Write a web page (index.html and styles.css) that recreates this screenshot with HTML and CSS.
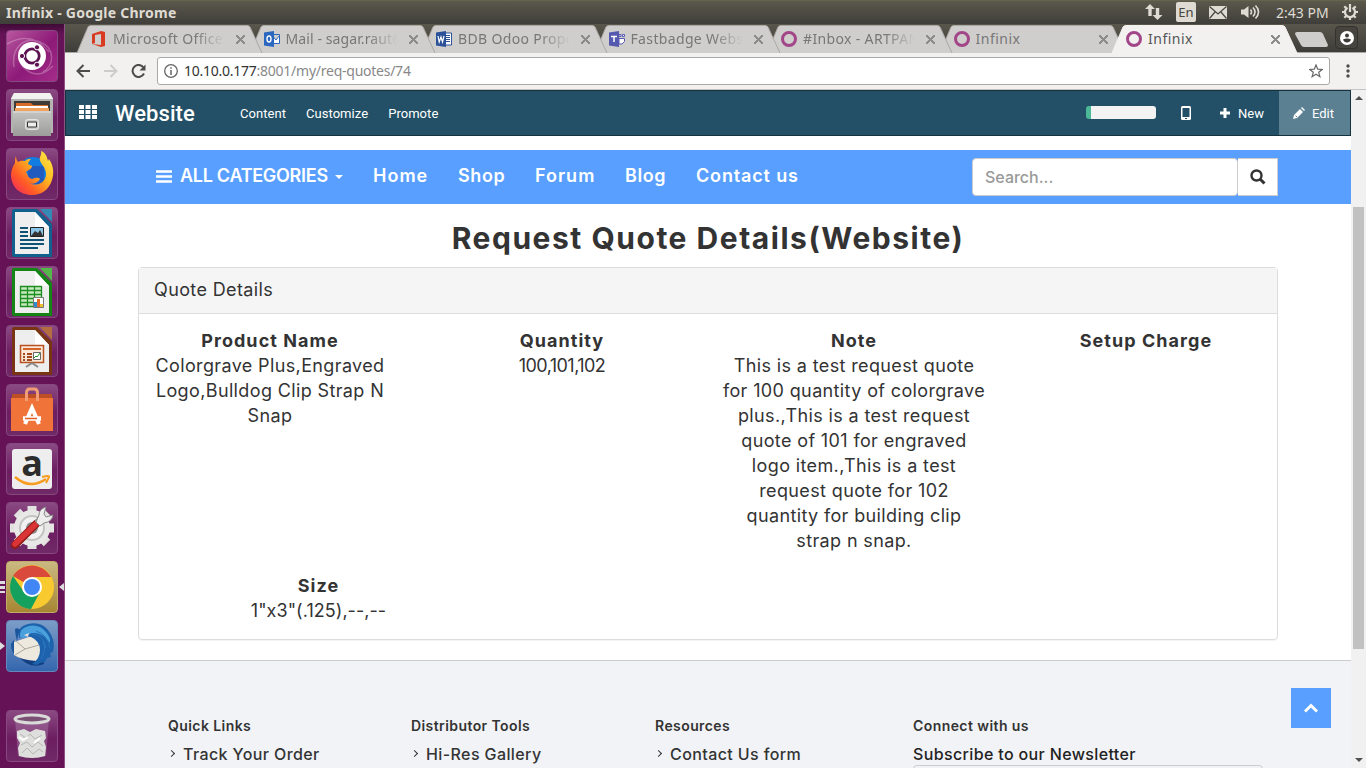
FILE: index.html
```html
<!DOCTYPE html>
<html lang="en">
<head>
<meta charset="utf-8">
<title>Infinix</title>
<link rel="stylesheet" href="styles.css">
</head>
<body>
<header class="sysbar">
  <span class="sysbar-title">Infinix - Google Chrome</span>
  <div class="indicators">
    <svg class="ind-net" width="18" height="18" viewBox="0 0 18 18"><path d="M5 1L0 6h3.300v7h3.400V6H10zM12.500 17l5-5h-3.300V5h-3.400v7H7.500z" fill="#dfdbd2"/></svg>
    <span class="ind-lang">En</span>
    <svg class="ind-mail" width="18" height="13" viewBox="0 0 18 13"><path fill="#dfdbd2" d="M0 0h18v13H0z"/><path d="M.5.5L9 8l8.500-7.500M.5 12.500L6 6m11.500 6.500L12 6" fill="none" stroke="#4b4a44" stroke-width="1.300"/></svg>
    <svg class="ind-vol" width="21" height="16" viewBox="0 0 21 16"><path fill="#dfdbd2" d="M0 5.500h3L7.500 2v12L3 10.500H0z"/><path d="M9.500 5.500q2 2.500 0 5M12 3.500q4 4.500 0 9M14.500 1.500q6 6.500 0 13" stroke="#dfdbd2" stroke-width="1.600" fill="none"/></svg>
    <span class="ind-clock">2:43 PM</span>
    <svg class="ind-gear" width="16" height="16" viewBox="0 0 16 16"><g stroke="#dfdbd2" fill="none"><path stroke-width="2.200" d="M5.500 3.700a5 5 0 1 0 5 0"/><path stroke-width="2.200" d="M8 0v8M0 8h3M13 8h3M8 13v3M2.300 13.700l2-2M13.700 13.700l-2-2M2.300 2.300l2 2M13.700 2.300l-2 2"/></g></svg>
  </div>
</header>
<div class="desktop">
  <aside class="launcher">
    <div class="tile tile-dash"><svg viewBox="0 0 52 52"><g fill="none" stroke="#fff" stroke-opacity=".25" stroke-width="1.500"><path d="M8 37C5 18 18 6 34 12s14 24 3 30M1 14q25-14 42 8M16 36q15 16 31 0"/></g><circle cx="26" cy="26" r="14" fill="#fff"/><circle cx="26" cy="26" r="7.200" fill="none" stroke="#5c1150" stroke-width="2.800"/><g fill="#5c1150" stroke="#fff" stroke-width="1"><circle cx="16" cy="26" r="2.600"/><circle cx="31" cy="17.300" r="2.600"/><circle cx="31" cy="34.700" r="2.600"/></g></svg></div>
    <div class="tile"><svg viewBox="0 0 52 52"><defs><linearGradient id="steel" x1="0" y1="0" x2="0" y2="1"><stop offset="0" stop-color="#c4c4c2"/><stop offset="1" stop-color="#9c9c9a"/></linearGradient></defs><path fill="#b4b4b2" d="M8 4h36l3 5v35H5V9z"/><path fill="#f2f2f0" d="M8 4h36l3 6H5z"/><path fill="#3e3b39" d="M8 12h36v12H8z"/><path fill="#d86b28" d="M10 14h15l2 2h15v8H10z"/><path fill="#fff" d="M10 17h32v3H10z"/><path fill="#f2a25c" d="M9 19h34v5H9z"/><path fill="url(#steel)" d="M7 22h38v25H7z"/><path fill="#d2d2d0" d="M7 22h38v2H7z"/><rect x="19.500" y="30.500" width="13" height="10" rx="2" fill="#c9c9c7" stroke="#e6e6e4"/><path fill="#eee" stroke="#333" d="M21.500 33h9v5h-9z"/></svg></div>
    <div class="tile"><svg viewBox="0 0 52 52"><defs><linearGradient id="fox" x1="1" y1="0" x2="0" y2="1"><stop offset="0" stop-color="#fff04a"/><stop offset=".4" stop-color="#ffb520"/><stop offset=".7" stop-color="#ff5a26"/><stop offset="1" stop-color="#ef1f68"/></linearGradient></defs><circle cx="27" cy="24" r="15" fill="#137ce0"/><path fill="#205bc0" d="M22 18h16v18H22z"/><path fill="url(#fox)" d="M10 8c0 3 1 5 2 6 3-2 6-1 7-1 2-2 4-2 6-2-2 2-3 4-3 5l4 2c0 3-4 4-6 6 2 3 2 6 6 7 3-1 6-2 8 0-2 4-8 6-11 4 8 4 16 0 17-8 1-8-8-12-6-18 2-4 1-5 1-6 5 2 6 6 7 10l1-2c5 7 5 15 3 21-3 10-11 15-20 15C13 47 5 38 5 27c0-5 2-9 4-12 0-3 0-5 1-7z"/></svg></div>
    <div class="tile"><svg viewBox="0 0 52 52"><path fill="#11618f" d="M8 2h23l15 15v33H8q-2 0-2-2V4q0-2 2-2z"/><path fill="#348ab5" d="M34 2h12v13z"/><path fill="#eee" d="M9 5h20l14 15v27H9z"/><path fill="#fff" d="M29 5v15h14z"/><path d="M14 21h8M14 25h8M14 29h8M14 33h24M14 37h24M14 41h18" stroke="#0e5276" stroke-width="1.800"/><path fill="#89c5e6" stroke="#222" d="M24.500 20.500h13v9h-13z"/><path d="M25 29l4-5 3 2 2-3 3 6z" fill="#333"/></svg></div>
    <div class="tile"><svg viewBox="0 0 52 52"><path fill="#148414" d="M8 2h23l15 15v33H8q-2 0-2-2V4q0-2 2-2z"/><path fill="#55b64a" d="M34 2h12v13z"/><path fill="#eee" d="M9 5h20l14 15v27H9z"/><path fill="#fff" d="M29 5v15h14z"/><path fill="#c8e8bf" stroke="#1d8f22" stroke-width="1.300" d="M14.500 20.500h21v20h-21zM14.500 24.500h21M14.500 28.500h21M14.500 32.500h21M14.500 36.500h21M21.500 20.500v20M28.500 20.500v20"/><path fill="#fff" stroke="#777" d="M27.500 31.500h10v10h-10z"/><path fill="#318bd0" d="M28 36h3v5h-3z"/><path fill="#e46b25" d="M31 33h3v8h-3z"/><path fill="#f0bd30" d="M34 38h3v3h-3z"/></svg></div>
    <div class="tile"><svg viewBox="0 0 52 52"><path fill="#793513" d="M8 2h23l15 15v33H8q-2 0-2-2V4q0-2 2-2z"/><path fill="#b36d40" d="M34 2h12v13z"/><path fill="#eee" d="M9 5h20l14 15v27H9z"/><path fill="#fff" d="M29 5v15h14z"/><path fill="#fbe7d8" stroke="#b75321" stroke-width="1.500" d="M14.500 20.500h23v17h-23z"/><path stroke="#d46427" stroke-width="2" d="M17 24h18"/><path stroke="#a44820" stroke-width="2" d="M17 29h2m2 0h5M17 32h2m2 0h5M17 35h2m2 0h5"/><path fill="#fff" stroke="#666" d="M27.500 27.500h7v7h-7z"/><path d="M28 33l2-2 1 1 3-4" stroke="#1f962d" fill="none"/><path d="M26 38l-6 4m6-4l6 4" stroke="#888" stroke-width="2"/></svg></div>
    <div class="tile"><svg viewBox="0 0 52 52"><path fill="#bd4f27" d="M6 10h40v5H6z"/><path fill="#f0743a" d="M5 14h42v33H5z"/><path d="M20.500 17V9q0-4 3-4h5q3 0 3 4v8" fill="none" stroke="#f09c76" stroke-width="3"/><path d="M19 40l7-16 7 16" fill="none" stroke="#fff" stroke-width="4"/><path d="M17 34.500h18" stroke="#fff" stroke-width="4.500"/><path d="M19 34.500h12" stroke="#e55d22" stroke-width="1.500"/></svg></div>
    <div class="tile"><svg viewBox="0 0 52 52"><rect x="6" y="6" width="40" height="40" rx="3" fill="#eee"/><text class="amz" x="26" y="33" text-anchor="middle">a</text><path d="M9 34q15 13 31 2" fill="none" stroke="#f79c1f" stroke-width="2.500"/><path d="M36 34q8-2 7 0l-3 6" fill="none" stroke="#f79c1f" stroke-width="2"/></svg></div>
    <div class="tile"><svg viewBox="0 0 52 52"><g stroke="#e2e2e0" stroke-width="9"><path d="M26 4v43M4 26h44M11 10l30 31M41 10L11 41"/></g><circle cx="26" cy="26" r="18" fill="#e8e8e6"/><circle cx="26" cy="26" r="12" fill="#f2f2f2" stroke="#c4c4c2" stroke-width="2"/><circle cx="26" cy="26" r="6" fill="#8d8d8b"/><path d="M9 43l21-21" stroke="#951c1c" stroke-width="8" stroke-linecap="round"/><path d="M9 42l21-20" stroke="#db3434" stroke-width="5.500" stroke-linecap="round"/><path d="M31 21l6-6" stroke="#999" stroke-width="7"/><path fill="#eee" stroke="#888" d="M33 13q0-6 7-8l-2 7 2 3 7-2q-1 7-9 8l-4 3-4-4z"/></svg></div>
    <div class="tile tile-chrome"><svg viewBox="0 0 52 52"><circle cx="26" cy="26" r="22" fill="#f9c930"/><path d="M26 26L7 15a22 22 0 0 1 38 1H26z" fill="#d94a3d"/><path d="M7 15a22 22 0 0 0 18 33l9-17-8-5-8 5z" fill="#14a05d"/><circle cx="26" cy="26" r="10" fill="#fff"/><circle cx="26" cy="26" r="8" fill="#4186f5"/></svg><span class="pips"></span><svg class="focus" viewBox="0 0 5 8"><path d="M5 0v8L0 4z" fill="#ddd"/></svg></div>
    <div class="tile tile-bird"><svg viewBox="0 0 52 52"><path fill="#123f80" d="M12 36q12 14 26 8l-2-16z"/><path fill="#eee9df" d="M8 22l24-8 6 12-7 15q-16-1-23-6z"/><path d="M9 20l10 9 14-4M19 29l-10 6" fill="none" stroke="#aaa69d"/><path fill="#1d62ac" d="M13 18q-3-11 9-14 13-3 20 6 8 10 5 22l-3 1 1 4-4 1-2 4-5 1-3 2-5-1q8-5 8-14t-9-13q-5-2-12 1z"/><path fill="#49a0dc" d="M14 17q-1-9 9-11 10-2 17 6 5 6 4 11-8-11-16-10-6 0-8 5z"/><path d="M26 14q11 0 14 14M30 11q11 3 14 17M37 21q4 8-2 18" stroke="#2876bb" fill="none"/><path fill="#1b569d" d="M9 9q3-2 5 1-2 4-3 11-2-8-2-12zM5 24l3-4v14q-3-4-3-10z"/><path d="M18 15l5-2-1 4z" fill="#ddd"/></svg><svg class="run" viewBox="0 0 5 8"><path d="M0 0v8l5-4z" fill="#ddd"/></svg></div>
    <div class="tile tile-trash"><svg viewBox="0 0 52 52"><path d="M9 9l3 37q14 4 28 0l3-37z" fill="#b58ab1" fill-opacity=".4"/><path fill="#dededc" d="M11 21l7-2 6 3 6-3 9 2 1 7-2 3 2 6-1 9q-13 4-26 0l-1-8 2-5-3-5z"/><path d="M14 24l6 4 4-4 5 5 7-4M15 35l6-3 5 5 6-5 5 4M16 43l5-5 6 6 6-5 4 3" stroke="#b5b5b3" fill="none"/><path d="M13 27l4 3 5-3M28 33l6-5" stroke="#fff" stroke-width="2" fill="none"/><ellipse cx="26" cy="9" rx="17" ry="4" fill="#7a5075" stroke="#dadad8" stroke-width="3"/></svg></div>
  </aside>
  <main class="browser">
    <div class="tabstrip">
      <div class="tab t1"><svg class="shape" viewBox="0 0 186 28"><path d="M0 28L11 2Q12 .5 14 .5h156q2 0 3 1.500L185 28"/></svg>
        <svg class="fav" viewBox="0 0 16 16"><path fill="#d83b22" d="M1 3l9-3 4 1v14l-4 1-9-3 9 1V3L4 4v8l-3 1z"/></svg><span class="tab-label fade">Microsoft Office H</span><i class="x"></i></div>
      <div class="tab t2"><svg class="shape" viewBox="0 0 186 28"><path d="M0 28L11 2Q12 .5 14 .5h156q2 0 3 1.500L185 28"/></svg>
        <svg class="fav" viewBox="0 0 16 16"><path fill="#fff" stroke="#2a67be" d="M8 3.500h7.500v9H8zM8 4l4 5 4-5"/><path fill="#2a67be" d="M0 1.500L10 0v16L0 14.500z"/><ellipse cx="5" cy="8" rx="2" ry="3" stroke="#fff" stroke-width="1.400" fill="none"/></svg><span class="tab-label fade tight">Mail - sagar.raut@</span><i class="x"></i></div>
      <div class="tab t3"><svg class="shape" viewBox="0 0 186 28"><path d="M0 28L11 2Q12 .5 14 .5h156q2 0 3 1.500L185 28"/></svg>
        <svg class="fav" viewBox="0 0 16 16"><path fill="#fff" stroke="#2b5299" d="M8 2h7.500v12H8zM9 4.500h5M9 6.500h5M9 8.500h5M9 10.500h5"/><path fill="#2b5299" d="M0 1.500L10 0v16L0 14.500z"/><path d="M2 5l1.200 6L5 6l1.500 5L8 5" fill="none" stroke="#fff" stroke-width="1.200"/></svg><span class="tab-label fade">BDB Odoo Propo</span><i class="x"></i></div>
      <div class="tab t4"><svg class="shape" viewBox="0 0 186 28"><path d="M0 28L11 2Q12 .5 14 .5h156q2 0 3 1.500L185 28"/></svg>
        <svg class="fav" viewBox="0 0 16 16"><path fill="#fff" stroke="#5558af" d="M10 3.500h2v2h-2zM13.500 3.500h2v2h-2zM10 7.500h5.500v3L13 13h-3z"/><path fill="#5558af" d="M0 1.500L10 0v16L0 14.500z"/><path d="M2 5.500h6M5 5v6" stroke="#fff" stroke-width="1.500"/></svg><span class="tab-label fade">Fastbadge Websi</span><i class="x"></i></div>
      <div class="tab t5"><svg class="shape" viewBox="0 0 186 28"><path d="M0 28L11 2Q12 .5 14 .5h156q2 0 3 1.500L185 28"/></svg>
        <span class="fav ring"></span><span class="tab-label fade">#Inbox - ARTPAN</span><i class="x"></i></div>
      <div class="tab t6"><svg class="shape" viewBox="0 0 186 28"><path d="M0 28L11 2Q12 .5 14 .5h156q2 0 3 1.500L185 28"/></svg>
        <span class="fav ring"></span><span class="tab-label wide">Infinix</span><i class="x"></i></div>
      <div class="tab active"><svg class="shape" viewBox="0 0 186 28"><path d="M0 28L11 2Q12 .5 14 .5h156q2 0 3 1.500L185 28"/></svg>
        <span class="fav ring"></span><span class="tab-label wide">Infinix</span><i class="x"></i></div>
      <svg class="newtab" viewBox="0 0 33 15"><path d="M2 0h23q2 0 3 2l5 11q0 2-2 2H9q-2 0-3-2L0 2q0-2 2-2z" fill="#cfcdcb"/></svg>
      <div class="profile"><svg viewBox="0 0 14 14"><circle cx="7" cy="7" r="7" fill="#fff"/><circle cx="7" cy="4.500" r="2" fill="#3d3c38"/><path fill="#3d3c38" d="M3 8.500q4-2 8 0-1 3-4 3t-4-3z"/></svg></div>
    </div>
    <div class="toolbar">
      <svg class="ic-back" viewBox="0 0 14 14"><path d="M14 7H1.500M7.500 1L1.500 7l6 6" fill="none" stroke="#4c4c4c" stroke-width="2"/></svg>
      <svg class="ic-fwd" viewBox="0 0 14 14"><path d="M0 7h12.500M6.500 1l6 6-6 6" fill="none" stroke="#ccc" stroke-width="2"/></svg>
      <svg class="ic-reload" viewBox="0 0 15 15"><path d="M12.500 3.500A6 6 0 1 0 13 9.500" fill="none" stroke="#4c4c4c" stroke-width="2"/><path fill="#4c4c4c" d="M14.500.5v6h-6z"/></svg>
      <div class="omnibox">
        <svg class="ic-info" viewBox="0 0 14 14"><circle cx="7" cy="7" r="6.300" fill="none" stroke="#666" stroke-width="1.300"/><path d="M7 6v5M7 3.200v1.600" stroke="#666" stroke-width="1.500"/></svg>
        <span class="url"><b>10.10.0.177</b>:8001/my/req-quotes/74</span>
        <svg class="ic-star" viewBox="0 0 14 14"><path d="M7 1l1.700 4.200 4.500.3-3.500 2.800 1.200 4.400L7 10.300l-3.900 2.400 1.200-4.400L.8 5.500l4.500-.3z" fill="none" stroke="#666" stroke-width="1.200"/></svg>
      </div>
      <svg class="ic-dots" viewBox="0 0 4 14"><g fill="#4c4c4c"><circle cx="2" cy="2" r="1.700"/><circle cx="2" cy="7" r="1.700"/><circle cx="2" cy="12" r="1.700"/></g></svg>
    </div>
    <div class="viewport">
      <div class="page">
        <div class="odoo">
          <svg class="apps" viewBox="0 0 18 14"><path fill="#fff" d="M0 0h5v4H0zM6.500 0h5v4h-5zM13 0h5v4h-5zM0 5h5v4H0zM6.500 5h5v4h-5zM13 5h5v4h-5zM0 10h5v4H0zM6.500 10h5v4h-5zM13 10h5v4h-5z"/></svg>
          <span class="brand">Website</span>
          <a class="om">Content</a><a class="om">Customize</a><a class="om">Promote</a>
          <span class="meter"></span>
          <svg class="phone" viewBox="0 0 10 14"><rect width="10" height="14" rx="1.500" fill="#fff"/><path fill="#235066" d="M1.500 2h7v9h-7zM4 12h2v1H4z"/></svg>
          <span class="new"><svg viewBox="0 0 10 10"><path d="M5 0v10M0 5h10" stroke="#fff" stroke-width="3"/></svg>New</span>
          <span class="edit"><svg viewBox="0 0 12 12"><path fill="#fff" d="M0 12l1-4 6-6 3 3-6 6zM8 1l1-1 3 3-1 1z"/><path d="M2.500 8.500L4 10" stroke="#5a8092"/></svg>Edit</span>
        </div>
        <nav class="nav">
          <svg class="burger" viewBox="0 0 16 13"><path d="M0 1.500h16M0 6.500h16M0 11.500h16" stroke="#fff" stroke-width="2.600"/></svg>
          <a class="cat">ALL CATEGORIES</a><i class="caret"></i>
          <a class="n-home">Home</a><a class="n-shop">Shop</a><a class="n-forum">Forum</a><a class="n-blog">Blog</a><a class="n-contact">Contact us</a>
          <div class="search"><span class="field">Search...</span><span class="go"><svg viewBox="0 0 16 16"><circle cx="6.500" cy="6.500" r="5" fill="none" stroke="#333" stroke-width="2.400"/><path d="M10 10l4.500 4.500" stroke="#333" stroke-width="3"/></svg></span></div>
        </nav>
        <h1>Request Quote Details(Website)</h1>
        <section class="panel">
          <div class="panel-head">Quote Details</div>
          <div class="panel-body">
            <div class="cols">
              <div><strong>Product Name</strong><br>Colorgrave Plus,Engraved<br>Logo,Bulldog Clip Strap N<br>Snap</div>
              <div><strong>Quantity</strong><br><span class="nums">100,101,102</span></div>
              <div><strong>Note</strong><br>This is a test request quote<br>for 100 quantity of colorgrave<br>plus.,This is a test request<br>quote of 101 for engraved<br>logo item.,This is a test<br>request quote for 102<br>quantity for building clip<br>strap n snap.</div>
              <div><strong>Setup Charge</strong></div>
            </div>
            <div class="size"><strong>Size</strong><br><span class="dims">1"x3"(.125),--,--</span></div>
          </div>
        </section>
        <footer class="footer">
          <div><h2>Quick Links</h2><a class="link"><i></i>Track Your Order</a></div>
          <div><h2>Distributor Tools</h2><a class="link"><i></i>Hi-Res Gallery</a></div>
          <div><h2>Resources</h2><a class="link"><i></i>Contact Us form</a></div>
          <div><h2>Connect with us</h2><span class="link sub">Subscribe to our Newsletter</span><span class="mailbox"></span></div>
        </footer>
        <span class="totop"><svg viewBox="0 0 16 10"><path d="M2 8.500l6-6 6 6" fill="none" stroke="#fff" stroke-width="3"/></svg></span>
      </div>
      <div class="scroll"><i class="up"></i><span class="thumb"></span><i class="down"></i></div>
    </div>
  </main>
</div>
</body>
</html>
```
FILE: styles.css
```css
* { box-sizing: border-box; }
body { margin: 0; width: 1366px; height: 768px; overflow: hidden; display: flex; flex-direction: column; background: #fff; font-family: Inter, sans-serif; color: #333; }
svg { display: block; flex: none; }

/* System bar */
.sysbar { height: 24px; flex: none; display: flex; align-items: center; background: linear-gradient(#5b584c, #3f3e3a); border-top: 1px solid #66634f; padding: 0 8px 1px 6px; color: #dfdbd2; font-family: "Noto Sans", sans-serif; }
.sysbar-title { font-size: 14px; font-weight: 700; letter-spacing: .25px; }
.indicators { margin-left: auto; display: flex; align-items: center; }
.ind-lang { width: 20px; height: 20px; margin-left: 13px; background: #dfdbd2; border-radius: 2px; color: #45443f; font-size: 13px; line-height: 21px; text-align: center; }
.ind-mail { margin-left: 13px; }
.ind-vol { margin-left: 14px; }
.ind-clock { width: 52px; margin-left: 14px; font-size: 14px; letter-spacing: 0; white-space: nowrap; }
.ind-gear { margin-left: 14px; }

.desktop { flex: 1; display: flex; min-height: 0; }

/* Launcher */
.launcher { width: 65px; flex: none; padding: 6px 0 0 6px; display: flex; flex-direction: column; gap: 7px; background: linear-gradient(#3f0a36, #651257 10px); border-right: 1px solid #8d5284; }
.tile { position: relative; width: 52px; height: 52px; flex: none; border-radius: 4px; background: linear-gradient(#8a4a82, #6c1d60 55%, #702a67); border: 1px solid #874780; }
.tile > svg:first-child { width: 52px; height: 52px; margin: -1px; }
.tile-dash { background: linear-gradient(135deg, #b8579f, #8d1a78 55%, #a52d8b); }
.tile-chrome { background: linear-gradient(#cbb982, #a78633); border-color: #c2aa69; }
.tile-bird { background: linear-gradient(#7d9dc7, #3466ae); border-color: #6689bc; }
.tile-trash { margin-top: 31px; }
.amz { font: 700 36px "Open Sans", sans-serif; fill: #2c2c2c; }
.focus { position: absolute; left: 52px; top: 21px; width: 5px; height: 8px; }
.run { position: absolute; left: -7px; top: 21px; width: 5px; height: 8px; }
.pips { position: absolute; left: -7px; top: 19px; width: 5px; height: 12px; background: repeating-linear-gradient(#ddd 0 3px, transparent 3px 5px); }

/* Browser chrome */
.browser { flex: 1; min-width: 0; display: flex; flex-direction: column; }
.tabstrip { height: 29px; flex: none; padding-left: 13px; display: flex; background: linear-gradient(#59574c, #3e3d39); border-bottom: 1px solid #a9a8a6; font-family: "Noto Sans", sans-serif; }
.tab { position: relative; isolation: isolate; width: 172.5px; flex: none; height: 29px; padding: 1px 0 1px 13px; display: flex; align-items: center; color: #777; font-size: 14px; letter-spacing: .35px; }
.t1 { z-index: 7; } .t2 { z-index: 6; } .t3 { z-index: 5; } .t4 { z-index: 4; } .t5 { z-index: 3; } .t6 { z-index: 2; }
.tab.active { z-index: 8; color: #555; }
.shape { position: absolute; z-index: -1; left: -1px; top: 1px; width: 186px; height: 28px; fill: #d0cecc; stroke: #aaa8a5; stroke-width: 1; }
.active .shape { fill: #f2f1f0; stroke: #f2f1f0; }
.fav { width: 16px; height: 16px; flex: none; }
.ring { border: 3px solid #a24689; border-radius: 50%; }
.tab-label { width: 114px; flex: none; margin-left: 6px; overflow: hidden; white-space: nowrap; line-height: 20px; }
.tight { letter-spacing: .1px; }
.wide { letter-spacing: .5px; }
.fade { -webkit-mask-image: linear-gradient(90deg, #000 82px, transparent 112px); mask-image: linear-gradient(90deg, #000 82px, transparent 112px); }
.x { width: 9px; height: 9px; margin: 1px 0 0 9px; flex: none; background: linear-gradient(45deg, transparent 43%, #8c8c8c 43% 57%, transparent 57%), linear-gradient(-45deg, transparent 43%, #8c8c8c 43% 57%, transparent 57%); }
.newtab { width: 33px; height: 15px; margin: 8px 0 0 9px; }
.profile { width: 23px; height: 23px; margin: 2px 0 0 7px; padding: 4px; border: 1px solid #33322f; border-radius: 4px; background: #45443f; }
.profile svg { width: 14px; height: 14px; }

.toolbar { height: 37px; flex: none; display: flex; align-items: center; background: #f2f1f0; border-bottom: 1px solid #c6c5c3; padding-left: 11px; }
.ic-back, .ic-fwd { width: 14px; height: 14px; }
.ic-fwd { margin-left: 14px; }
.ic-reload { width: 15px; height: 15px; margin-left: 13px; }
.omnibox { width: 1173px; height: 28px; margin-left: 11px; display: flex; align-items: center; padding: 0 6px; background: #fff; border: 1px solid #aaa9a7; border-radius: 3px; font: 14px "Noto Sans", sans-serif; }
.ic-info { width: 14px; height: 14px; }
.url { margin: -2px 0 0 6px; color: #888; letter-spacing: -.25px; }
.url b { font-weight: 400; color: #333; }
.ic-star { width: 14px; height: 14px; margin-left: auto; }
.ic-dots { width: 4px; height: 14px; margin-left: 16px; }

/* Page */
.viewport { flex: 1; display: flex; min-height: 0; }
.page { position: relative; width: 1286px; overflow: hidden; display: flex; flex-direction: column; }
.odoo { height: 46px; flex: none; display: flex; align-items: center; background: #235066; border: 1px solid #15323f; color: #fff; font: 13px Roboto, sans-serif; }
.apps { width: 18px; height: 14px; margin: -2px 0 0 13px; }
.brand { width: 125px; margin-left: 18px; font-size: 22px; font-weight: 500; letter-spacing: .1px; }
.om { margin-right: 20px; letter-spacing: .05px; }
.meter { width: 70px; height: 13px; margin: -2px 0 0 auto; border-radius: 3px; background: linear-gradient(90deg, #4bb998 5px, #f3f3f3 5px); }
.phone { width: 10px; height: 14px; margin-left: 25px; }
.new { margin-left: 29px; width: 59px; display: flex; align-items: center; gap: 8px; }
.new svg { width: 10px; height: 10px; }
.edit { width: 71px; height: 44px; display: flex; align-items: center; gap: 7px; padding-left: 14px; background: #5a8092; }
.edit svg { width: 12px; height: 12px; }

.nav { height: 54px; flex: none; margin-top: 14px; padding: 0 73px 2px 91px; display: flex; align-items: center; background: #589fff; color: #fff; font-size: 18px; line-height: 22px; font-weight: 600; white-space: nowrap; }
.nav a { margin-top: -1px; }
.burger { width: 16px; height: 13px; }
.cat { width: 147px; margin-left: 8px; letter-spacing: -.28px; }
.caret { margin: 2px 30px 0 8px; border: 4px solid transparent; border-top-color: #fff; border-bottom: 0; }
.n-home { width: 85px; letter-spacing: 1px; }
.n-shop { width: 77px; letter-spacing: .6px; }
.n-forum { width: 90px; letter-spacing: 1px; }
.n-blog { width: 71px; letter-spacing: .6px; }
.n-contact { letter-spacing: .85px; }
.search { margin: 2px 0 0 auto; width: 306px; height: 38px; display: flex; }
.field { width: 266px; padding-left: 12px; line-height: 36px; font-size: 16px; font-weight: 500; color: #999; background: #fff; border: 1px solid #ccc; border-radius: 4px; }
.go { flex: 1; display: flex; align-items: center; justify-content: center; background: #fff; border: 1px solid #ccc; border-left: 0; }
.go svg { width: 16px; height: 16px; }

h1 { margin: 14px 0 9px; text-align: center; font-size: 30px; line-height: 40px; font-weight: 700; letter-spacing: 1.52px; }
.panel { flex: none; width: 1140px; height: 373px; margin-left: 73px; border: 1px solid #ddd; border-radius: 4px; box-shadow: 0 1px 1px rgba(0,0,0,.05); font-size: 18px; line-height: 25px; letter-spacing: .37px; }
.panel strong { letter-spacing: 1.05px; }
.panel-head { height: 46px; padding: 9px 15px; background: #f5f5f5; border-bottom: 1px solid #ddd; }
.panel-body { padding: 14px 0; text-align: center; }
.cols { display: grid; grid-template-columns: repeat(4, 292px); margin-left: -15px; white-space: nowrap; }
.nums { letter-spacing: -.55px; }
.dims { letter-spacing: .05px; }
.size { width: 359px; margin-top: 20px; }

.footer { flex: 1; margin-top: 20px; padding: 54px 0 0 103px; display: grid; grid-template-columns: 243px 244px 258px 350px; background: #f2f3f7; border-top: 1px solid #ccc; }
h2 { margin: 0; font-size: 14px; line-height: 22px; font-weight: 600; letter-spacing: .42px; }
.link { display: flex; align-items: center; height: 22px; margin-top: 6px; font-size: 16px; font-weight: 500; letter-spacing: .4px; white-space: nowrap; }
.link i { width: 5px; height: 5px; margin: 0 9px 2px 1px; border: solid #333; border-width: 1px 1px 0 0; transform: rotate(45deg); }
.sub { color: #222; letter-spacing: .36px; }
.mailbox { display: block; height: 30px; margin-top: 0; border: 1px solid #ccc; border-radius: 4px; }
.totop { position: absolute; left: 1226px; top: 598px; width: 40px; height: 40px; display: flex; align-items: center; justify-content: center; background: #589fff; }
.totop svg { width: 16px; height: 10px; }
.scroll { width: 15px; display: flex; flex-direction: column; align-items: center; background: #f1f1f1; }
.up { margin-top: 6px; border: 4px solid transparent; border-top: 0; border-bottom-color: #505050; }
.thumb { width: 11px; height: 442px; margin-top: 107px; background: #c1c1c1; }
.down { margin: auto 0 6px; border: 4px solid transparent; border-bottom: 0; border-top-color: #505050; }
```
